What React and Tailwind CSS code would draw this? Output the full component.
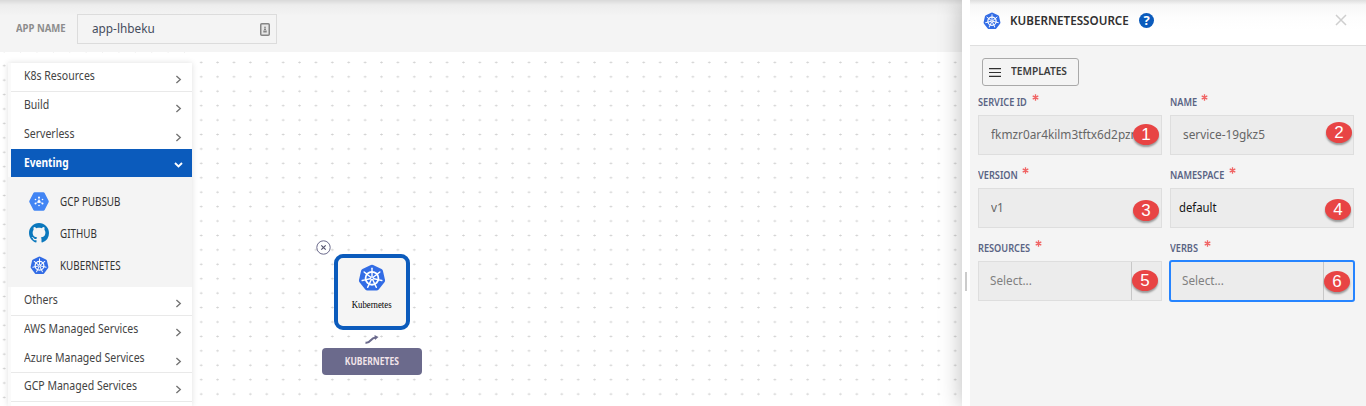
import React from "react";

const SPOKES = [0, 51.43, 102.86, 154.29, 205.71, 257.14, 308.57];

function KubernetesLogo({ className }) {
  return (
    <svg viewBox="0 0 100 100" className={className}>
      <path
        d="M46 3.5q4-2 8 0L84 18q4 2 5 6.200L96.500 57q1 4.500-2 8L74 91.500q-3 3.500-7.500 3.500h-33q-4.500 0-7.500-3.500L5.500 65q-3-3.500-2-8L11 24.200Q12 20 16 18z"
        fill="#326ce5"
      />
      <g fill="none" stroke="#fff" strokeLinecap="round">
        <circle cx="50" cy="51" r="23" strokeWidth="6.500" />
        <circle cx="50" cy="51" r="5" strokeWidth="4" />
        {SPOKES.map((a) => (
          <g key={a} transform={`rotate(${a} 50 51)`}>
            <path d="M50 44V29" strokeWidth="5" />
            <path d="M50 26V15" strokeWidth="5" />
          </g>
        ))}
      </g>
    </svg>
  );
}

function PubSubLogo() {
  return (
    <svg viewBox="0 0 20 19" className="h-[19px] w-5">
      <path d="M5.600.3h8.800q.8 0 1.200.7l4 7.700q.4.800 0 1.600l-4 7.700q-.4.700-1.200.7H5.600q-.8 0-1.200-.7L.4 10.300q-.4-.8 0-1.600L4.400 1q.4-.7 1.200-.7z" fill="#4285f4" />
      <g stroke="#fff" strokeWidth=".6" fill="#fff">
        <path d="M10 9.500V5.500M10 9.500l3.500 2M10 9.500l-3.500 2" />
        <circle cx="10" cy="9.500" r="1.500" stroke="none" />
        <circle cx="10" cy="5.500" r="1" stroke="none" />
        <circle cx="10" cy="13.500" r=".8" stroke="none" />
        <circle cx="6.500" cy="7.500" r=".8" stroke="none" />
        <circle cx="13.500" cy="7.500" r=".8" stroke="none" />
        <circle cx="6.500" cy="11.500" r="1" stroke="none" />
        <circle cx="13.500" cy="11.500" r="1" stroke="none" />
      </g>
    </svg>
  );
}

function GithubLogo() {
  return (
    <svg viewBox="0 0 16 16" className="h-5 w-5" fill="#0b78bd">
      <path d="M8 0C3.580 0 0 3.580 0 8c0 3.540 2.290 6.530 5.470 7.590.4.070.55-.17.55-.38 0-.19-.01-.82-.01-1.490-2.010.37-2.530-.49-2.690-.94-.09-.23-.48-.94-.82-1.130-.28-.15-.68-.52-.01-.53.63-.01 1.080.58 1.230.82.72 1.210 1.870.87 2.330.66.07-.52.28-.87.51-1.070-1.780-.2-3.640-.89-3.640-3.950 0-.87.31-1.590.82-2.150-.08-.2-.36-1.020.08-2.120 0 0 .67-.21 2.200.82.64-.18 1.320-.27 2-.27s1.360.09 2 .27c1.530-1.040 2.200-.82 2.200-.82.44 1.100.16 1.920.08 2.120.51.56.82 1.270.82 2.150 0 3.070-1.870 3.750-3.650 3.950.29.25.54.73.54 1.480 0 1.070-.01 1.930-.01 2.200 0 .21.15.46.55.38A8.010 8.010 0 0 0 16 8c0-4.420-3.580-8-8-8z" />
    </svg>
  );
}

function MenuRow({ label, height, line }) {
  return (
    <div className={`flex items-start justify-between border-b bg-white pl-[12.500px] pr-2.5 ${height} ${line ? "border-[#e9e9e9]" : "border-white"}`}>
      <span className="origin-left scale-x-[0.877] whitespace-nowrap pt-[5px] text-[12px] leading-4 text-[#434343]">{label}</span>
      <svg viewBox="0 0 7 10" className="mt-[11.500px] h-[9px] w-[7px] shrink-0">
        <path d="M1.200 1l4.300 4-4.300 4" fill="none" stroke="#737373" strokeWidth="1.500" />
      </svg>
    </div>
  );
}

function SubItem({ icon, label }) {
  return (
    <div className="flex h-8 items-center">
      <span className="flex w-5 justify-center">{icon}</span>
      <span className="ml-[11px] mt-0.5 origin-left scale-x-[0.82] whitespace-nowrap text-[12px] leading-4 text-[#333]">{label}</span>
    </div>
  );
}

function Callout({ n, place }) {
  return (
    <span className={`absolute flex h-[21px] w-[26px] items-center justify-center rounded-[50%] bg-[#e84444] pb-px font-['Liberation_Sans',sans-serif] text-[17px] leading-none text-white shadow-[0_2px_2px_rgba(0,0,0,0.35)] ${place}`}>
      {n}
    </span>
  );
}

function Field({ label, labelWidth, n, place, focused, children }) {
  return (
    <div>
      <div className="flex h-[27px] items-start">
        <span className={`whitespace-nowrap pt-1.5 text-[10.500px] font-semibold leading-4 text-[#5a6484] ${labelWidth}`}>
          <span className="inline-block origin-left scale-x-[0.875]">{label}</span>
        </span>
        <svg viewBox="0 0 8 8" className="mt-[6px] h-[7px] w-[7px]">
          <path d="M4 .4v7.200M.8 2.200l6.400 3.600M.8 5.800l6.400-3.600" stroke="#f06464" strokeWidth="1.500" />
        </svg>
      </div>
      <div className={`relative flex h-10 items-center border bg-[#ececec] text-[13px] text-[#666] ${focused ? "rounded-[2px] border-transparent outline-2 outline-[#2684ff] -outline-offset-1" : "border-[#dedede]"}`}>
        {children}
        <Callout n={n} place={place} />
      </div>
    </div>
  );
}

function FieldValue({ children }) {
  return <span className="ml-3 origin-left scale-x-[0.91] whitespace-nowrap">{children}</span>;
}

function SelectBody() {
  return (
    <div className="flex h-full w-full items-center">
      <span className="flex-1 pl-[11px] text-[#808080]">
        <span className="inline-block origin-left scale-x-[0.9]">Select...</span>
      </span>
      <span className="h-[38px] w-[30px] border-l border-[#c8c8c8]" />
    </div>
  );
}

const DOTS = "bg-[radial-gradient(ellipse_1.600px_1.200px_at_center,#d0d0d0_50%,transparent_100%)] bg-[length:16.400px_14.430px]";

export default function App() {
  return (
    <div className="flex h-[406px] w-[1366px] overflow-hidden bg-white font-['Noto_Sans','Open_Sans',sans-serif]">
      <div className="flex w-[962px] flex-col">
        <header className="flex h-[52px] shrink-0 items-center bg-[linear-gradient(#d9d9d9_0px,#ededed_5px,#f4f4f4_16px)] pl-4 pt-1.5">
          <span className="w-[61px] whitespace-nowrap text-[10.500px] font-bold text-[#8d8d8d]">
            <span className="inline-block origin-left scale-x-[0.91]">APP NAME</span>
          </span>
          <div className="flex h-[30px] w-[200px] items-center justify-between border border-[#dcdcdc] bg-[#f4f4f4] pl-3.5 pr-1.5">
            <span className="origin-left scale-x-[0.907] text-[13px] text-[#454c5c]">app-lhbeku</span>
            <svg viewBox="0 0 10 13" className="h-[13px] w-2.5">
              <rect x=".75" y=".75" width="8.500" height="11.500" rx="1" fill="#e6e6e6" stroke="#858585" strokeWidth="1.500" />
              <path d="M5 3l1 2H4zM4 5.500h2v1.500H4zM3.300 7.500h3.400v2H3.300z" fill="#858585" />
            </svg>
          </div>
        </header>

        <div className="flex flex-1">
          <nav className={`w-[192px] pl-2 pt-[11px] ${DOTS} bg-[position:-4px_6.500px]`}>
            <div className="bg-[#fafafa] shadow-[0_0_6px_rgba(0,0,0,0.13)]">
              <div className="ml-[3px]">
                <MenuRow label="K8s Resources" height="h-[29px]" line />
                <MenuRow label="Build" height="h-[29px]" />
                <MenuRow label="Serverless" height="h-7" />
                <div className="flex h-7 items-start justify-between bg-[#0b5bbc] pl-[12.500px] pr-[9px]">
                  <span className="origin-left scale-x-[0.845] pt-[6px] text-[12px] font-bold leading-4 text-white">Eventing</span>
                  <svg viewBox="0 0 9 6" className="mt-[13px] h-1.5 w-[9px]">
                    <path d="M1 1l3.500 3.500L8 1" fill="none" stroke="#fff" strokeWidth="1.900" />
                  </svg>
                </div>
              </div>
              <div className="h-[110px] bg-[#f4f4f4] pl-[21px] pt-2">
                <SubItem icon={<PubSubLogo />} label="GCP PUBSUB" />
                <SubItem icon={<GithubLogo />} label="GITHUB" />
                <SubItem icon={<KubernetesLogo className="h-[19px] w-[19px]" />} label="KUBERNETES" />
              </div>
              <div className="ml-[3px]">
                <MenuRow label="Others" height="h-[29px]" line />
                <MenuRow label="AWS Managed Services" height="h-[29px]" />
                <MenuRow label="Azure Managed Services" height="h-7" line />
                <MenuRow label="GCP Managed Services" height="h-[29px]" line />
                <div className="h-1 bg-white" />
              </div>
            </div>
          </nav>

          <main className={`relative flex-1 ${DOTS} bg-[position:1px_3.200px]`}>
            <div className="absolute left-[130px] top-[202px] flex w-[100px] flex-col items-center">
              <div className="flex h-[76px] w-[76px] flex-col items-center rounded-[9px] border-4 border-[#0b5bbc] bg-[#f5f5f5] pt-1.5">
                <KubernetesLogo className="h-[28px] w-[28px]" />
                <span className="mt-[7px] scale-x-[0.92] font-['Liberation_Serif',serif] text-[9.500px] leading-3 text-black">Kubernetes</span>
              </div>
              <svg viewBox="0 0 14 9" className="mt-[5px] h-[9px] w-3.5">
                <path d="M.5 7.700C6 8.500 5 3 10.500 2.500" fill="none" stroke="#6b6a8c" strokeWidth="2.200" />
                <path d="M9.500 0l4 2-3.500 3z" fill="#6b6a8c" />
              </svg>
              <div className="mt-1 flex h-[27px] w-[100px] items-center justify-center rounded-[4px] bg-[#6b6a8c] text-[10px] font-bold text-[#f1e4e9]">
                <span className="scale-x-[0.85]">KUBERNETES</span>
              </div>
            </div>
            <svg viewBox="0 0 15 15" className="absolute left-[124px] top-[188px] h-[15px] w-[15px]">
              <circle cx="7.500" cy="7.500" r="6.700" fill="#fff" stroke="#6b6a8c" />
              <path d="M5.300 5.300l4.400 4.400M9.700 5.300L5.300 9.700" stroke="#55546f" strokeWidth="1.200" />
            </svg>
          </main>
        </div>
      </div>

      <aside className="relative flex w-[404px] bg-white shadow-[0_0_22px_rgba(0,0,0,0.27)]">
        <div className="flex w-2 items-start pl-[3px] pt-[272px]">
          <div className="h-[19px] w-[2px] bg-[#cbcbcb]" />
        </div>
        <div className="flex w-[396px] flex-col">
          <header className="flex h-[45px] items-center bg-[linear-gradient(#dedede_0px,#f7f7f7_5px,#fdfdfd_18px,#fff_30px)] pl-[13px] pr-[19px]">
            <KubernetesLogo className="mt-[-3px] h-[18px] w-[18px]" />
            <span className="ml-[9px] w-[120px] whitespace-nowrap pb-1 text-[12px] font-semibold text-[#303030]">
              <span className="inline-block origin-left scale-x-[0.97]">KUBERNETESSOURCE</span>
            </span>
            <span className="mb-[5px] ml-[9px] flex h-[15px] w-[15px] items-center justify-center rounded-full bg-[#0b5bbc] text-[13px] font-bold leading-none text-white">?</span>
            <svg viewBox="0 0 12 12" className="mb-[5px] ml-auto h-3 w-3">
              <path d="M1 1l10 10M11 1L1 11" stroke="#cecece" strokeWidth="1.500" />
            </svg>
          </header>
          <section className="flex-1 border-t border-[#dfdfdf] bg-[#f4f4f4] pl-2 pt-3">
            <button className="ml-1 flex h-7 w-[97px] items-center rounded-[3px] border border-[#a9a9a9] pl-1.5">
              <svg viewBox="0 0 12 9" className="h-[9px] w-3">
                <path d="M0 .6h12M0 4.500h12M0 8.400h12" stroke="#303030" strokeWidth="1.200" />
              </svg>
              <span className="ml-2.5 origin-left scale-x-[0.97] text-[10.500px] font-semibold text-[#3c3c3c]">TEMPLATES</span>
            </button>
            <div className="mt-[2px] grid grid-cols-[184px_184px] gap-x-2 gap-y-1.5">
              <Field label="SERVICE ID" labelWidth="w-[54px]" n="1" place="left-[154px] top-[8px]">
                <FieldValue>fkmzr0ar4kilm3tftx6d2pzn</FieldValue>
              </Field>
              <Field label="NAME" labelWidth="w-[31px]" n="2" place="left-[155px] top-[6px]">
                <FieldValue>service-19gkz5</FieldValue>
              </Field>
              <Field label="VERSION" labelWidth="w-[44px]" n="3" place="left-[154px] top-[11px]">
                <FieldValue>v1</FieldValue>
              </Field>
              <Field label="NAMESPACE" labelWidth="w-[59px]" n="4" place="left-[154px] top-[10px]">
                <span className="ml-2 origin-left scale-x-[0.87] text-[#161616]">default</span>
              </Field>
              <Field label="RESOURCES" labelWidth="w-[57px]" n="5" place="left-[153px] top-[8px]">
                <SelectBody />
              </Field>
              <Field label="VERBS" labelWidth="w-[34px]" n="6" place="left-[153px] top-[9px]" focused>
                <SelectBody />
              </Field>
            </div>
          </section>
        </div>
      </aside>
    </div>
  );
}
